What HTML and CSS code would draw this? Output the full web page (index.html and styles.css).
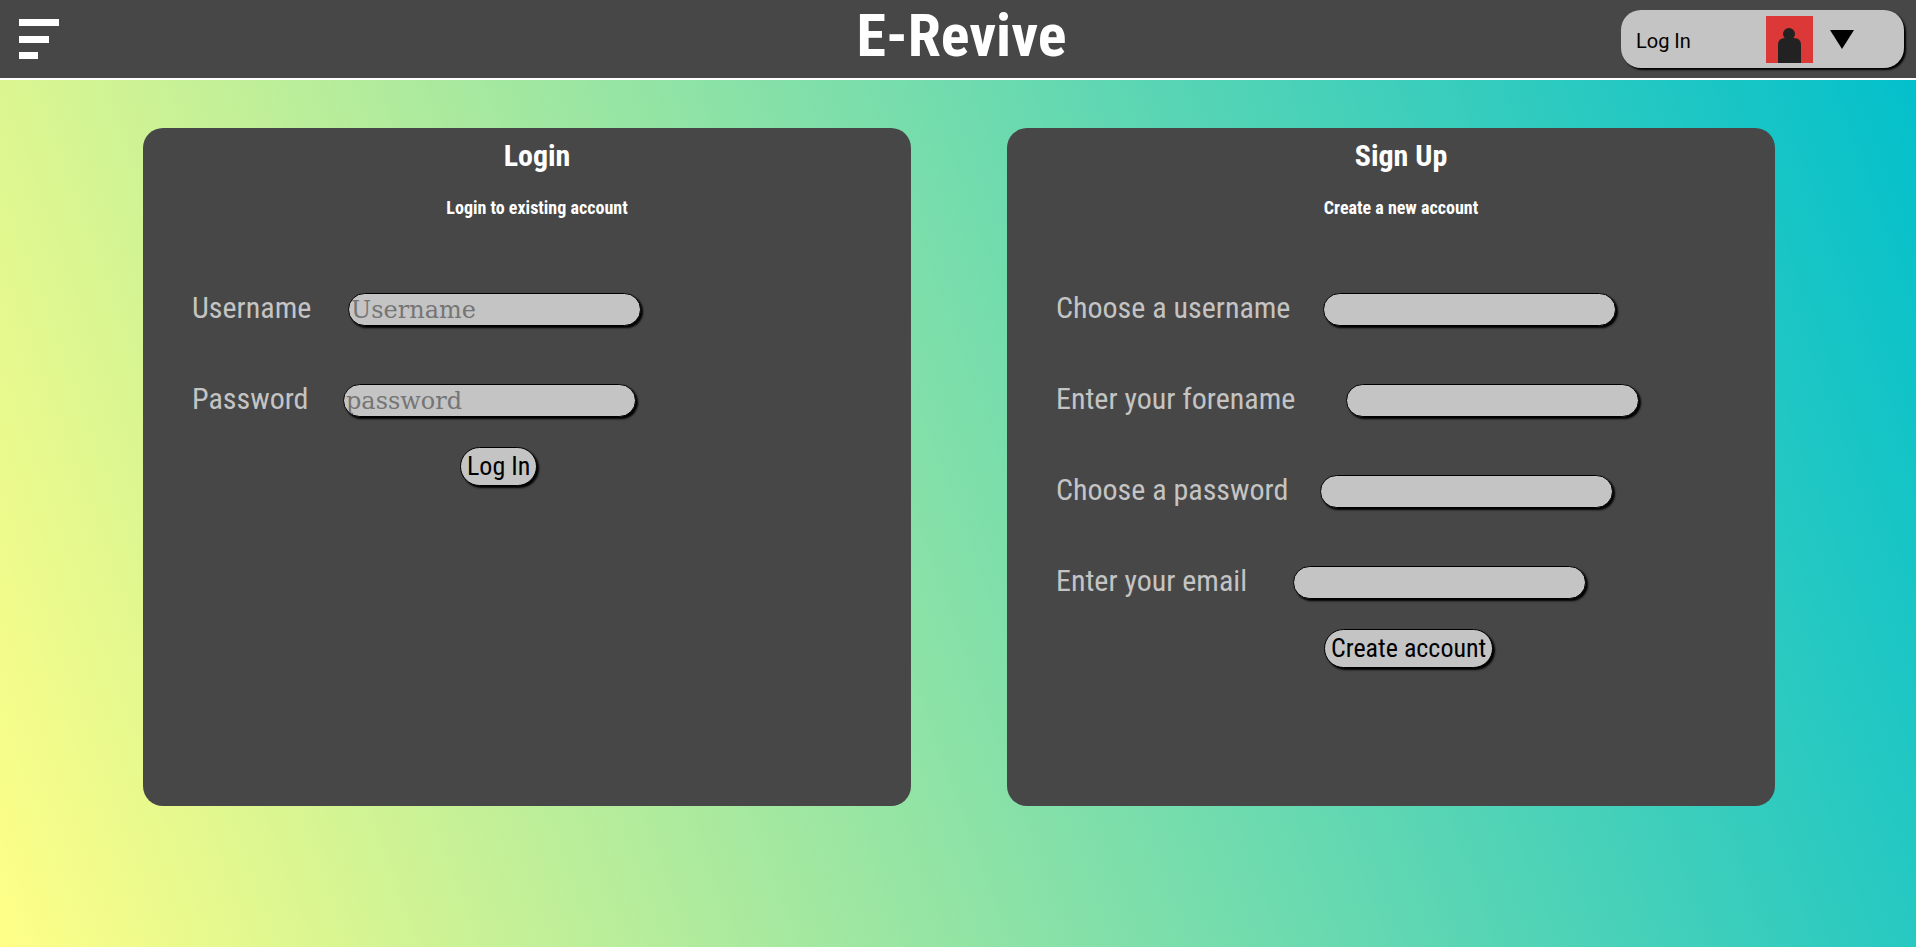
FILE: index.html
```html
<!DOCTYPE html>
<html lang="en">
<head>
<meta charset="utf-8">
<title>E-Revive</title>
<link rel="stylesheet" href="styles.css">
</head>
<body>
<header class="topbar">
  <button class="menu" type="button" aria-label="Menu">
    <svg width="40" height="40" viewBox="0 0 40 40" fill="#fff" aria-hidden="true"><path d="M0 0h40v7H0zM0 17h30v7H0zM0 33h19v7H0z"/></svg>
  </button>
  <h1 class="brand">E-Revive</h1>
  <button class="account" type="button">
    <span class="account-name">Log In</span>
    <svg class="avatar" width="47" height="47" viewBox="0 0 47 47" aria-hidden="true"><rect width="47" height="47" fill="#dd3838"/><g fill="#222"><circle cx="23" cy="18" r="6"/><path d="M12 47V29q0-7 7-7h9q7 0 7 7v18z"/></g></svg>
    <svg class="caret" width="24" height="19" viewBox="0 0 24 19" aria-hidden="true"><path d="M0 0h24L12 19z"/></svg>
  </button>
</header>
<main class="panels">
  <section class="panel">
    <h2 class="title">Login</h2>
    <p class="subtitle">Login to existing account</p>
    <form class="form">
      <div class="field"><label class="w-user" for="user">Username</label><input id="user" type="text" placeholder="Username"></div>
      <div class="field"><label class="w-pass" for="pass">Password</label><input id="pass" type="password" placeholder="password"></div>
      <button class="submit" type="button">Log In</button>
    </form>
  </section>
  <section class="panel">
    <h2 class="title">Sign Up</h2>
    <p class="subtitle">Create a new account</p>
    <form class="form">
      <div class="field"><label class="w-new-user" for="new-user">Choose a username</label><input id="new-user" type="text"></div>
      <div class="field"><label class="w-forename" for="forename">Enter your forename</label><input id="forename" type="text"></div>
      <div class="field"><label class="w-new-pass" for="new-pass">Choose a password</label><input id="new-pass" type="password"></div>
      <div class="field"><label class="w-email" for="email">Enter your email</label><input id="email" type="email"></div>
      <button class="submit" type="button">Create account</button>
    </form>
  </section>
</main>
</body>
</html>
```
FILE: styles.css
```css
* { box-sizing: border-box; }
body {
  margin: 0;
  min-height: 100vh;
  background: linear-gradient(70deg, #ffff87, #00bfcc);
  font-family: "Roboto Condensed", "Liberation Sans Narrow", Roboto, sans-serif;
}
button { font-family: inherit; cursor: pointer; }
.topbar {
  display: grid;
  grid-template-columns: 1fr auto 1fr;
  align-items: center;
  height: 80px;
  padding: 0 12px 0 19px;
  background: #474747;
  border-bottom: 2px solid #fff;
}
.menu { justify-self: start; padding: 0; border: 0; background: none; }
.menu svg { display: block; }
.brand { margin: 0; padding-bottom: 6px; color: #fff; font-size: 60px; line-height: 72px; font-weight: 700; }
.account {
  justify-self: end;
  display: flex;
  align-items: center;
  width: 283px;
  height: 58px;
  padding: 0 50px 0 15px;
  border: 0;
  border-radius: 20px;
  background: #c4c4c4;
  box-shadow: 2px 2px 2px #000;
  color: #000;
  font-family: Roboto, sans-serif;
  font-size: 20px;
}
.account-name { padding-top: 4px; }
.avatar { margin: 0 17px 0 auto; }
.panels {
  display: grid;
  grid-template-columns: 1fr 1fr;
  gap: 96px;
  padding: 48px 141px 0 143px;
}
.panel {
  min-height: 678px;
  padding: 8px 0 0 20px;
  border-radius: 20px;
  background: #474747;
}
.title, .subtitle { margin: 0; color: #fff; text-align: center; }
.title { font-size: 30px; line-height: 40px; font-weight: 700; }
.subtitle { margin-top: 20px; font-size: 18px; line-height: 24px; font-weight: 700; }
.form { padding: 73px 0 0 29px; }
.field { display: flex; align-items: center; gap: 30px; height: 33px; margin-bottom: 58px; }
.field label { padding-bottom: 4px; color: #c4c4c4; font-size: 30px; line-height: 32px; }
.w-user { min-width: 126px; }
.w-pass { min-width: 121px; }
.w-new-user { min-width: 237px; }
.w-forename { min-width: 260px; }
.w-new-pass { min-width: 234px; }
.w-email { min-width: 207px; }
.field input {
  width: 293px;
  height: 33px;
  padding: 0 2px;
  border: 1px solid #000;
  border-radius: 20px;
  background: #c4c4c4;
  box-shadow: 2px 2px 2px #000;
  font-family: "DejaVu Serif", serif;
  font-size: 24px;
}
.field input::placeholder { color: #757575; }
.submit {
  display: block;
  height: 39px;
  margin: -28px 0 0 268px;
  padding: 0 6px 2px;
  border: 1px solid #000;
  border-radius: 20px;
  background: #c4c4c4;
  box-shadow: 2px 2px 2px #000;
  color: #000;
  font-size: 26px;
}
```
